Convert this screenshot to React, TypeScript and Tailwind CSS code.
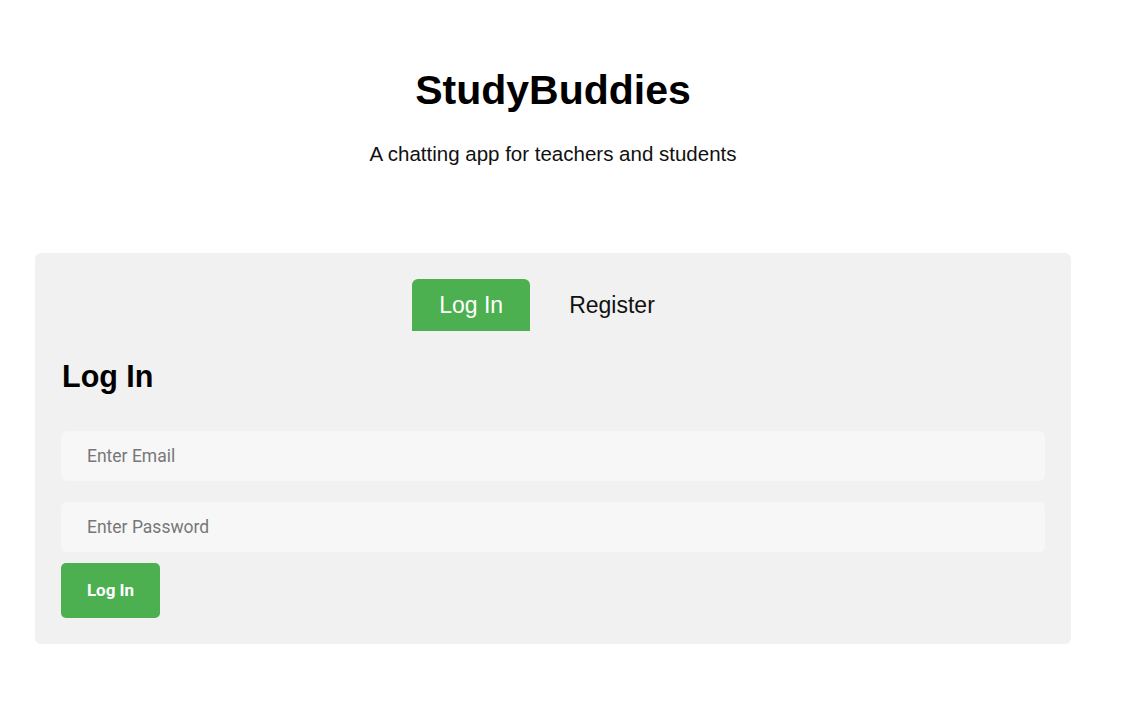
import { useState } from "react";

export default function App() {
    const [tab, setTab] = useState<"login" | "register">("login");

    return (
        <div className="min-h-screen bg-white font-['Liberation_Sans',Arial,sans-serif] text-black">
            <div className="ml-[35px] w-[1036px] pt-[70px]">
                {/* Header */}
                <h1 className="text-center text-[41px] font-bold leading-none">StudyBuddies</h1>
                <p className="mt-[33px] text-center text-[20.5px] leading-none text-[#111]">
                    A chatting app for teachers and students
                </p>

                {/* Card */}
                <div className="mt-[88px] rounded-md bg-[#f1f1f1] px-[26px] pt-[26px] pb-[26px]">
                    <div className="flex justify-center">
                        <button
                            onClick={() => setTab("login")}
                            className={`h-[52px] rounded-t-md px-[27px] pt-px text-[23px] leading-none ${tab === "login" ? "bg-[#4caf50] text-white" : "text-[#111]"}`}
                        >
                            Log In
                        </button>
                        <button
                            onClick={() => setTab("register")}
                            className={`h-[52px] rounded-t-md px-[39px] pt-px text-[23px] leading-none ${tab === "register" ? "bg-[#4caf50] text-white" : "text-[#111]"}`}
                        >
                            Register
                        </button>
                    </div>

                    <h2 className="mt-[30px] pl-px text-[30.5px] font-bold leading-none">Log In</h2>

                    <div className="mt-[40px] flex flex-col">
                        <input
                            type="email"
                            placeholder="Enter Email"
                            className="h-[50px] w-full rounded-md bg-[#f7f7f7] px-[26px] font-['Roboto',sans-serif] text-[17.5px] outline-none placeholder:text-[#777]"
                        />
                        <input
                            type="password"
                            placeholder="Enter Password"
                            className="mt-[21px] h-[50px] w-full rounded-md bg-[#f7f7f7] px-[26px] font-['Roboto',sans-serif] text-[17.5px] outline-none placeholder:text-[#777]"
                        />
                        <button className="mt-[11px] h-[55px] w-[99px] rounded-[5px] bg-[#4caf50] font-['Roboto',sans-serif] text-[17px] font-bold text-white">
                            Log In
                        </button>
                    </div>
                </div>
            </div>
        </div>
    );
}
